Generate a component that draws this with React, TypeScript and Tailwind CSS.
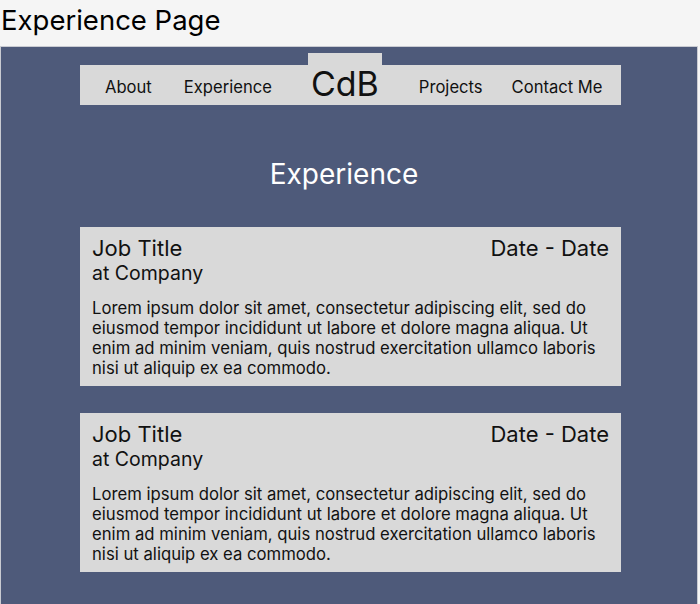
import React from "react";

const lorem =
  "Lorem ipsum dolor sit amet, consectetur adipiscing elit, sed do eiusmod tempor incididunt ut labore et dolore magna aliqua. Ut enim ad minim veniam, quis nostrud exercitation ullamco laboris nisi ut aliquip ex ea commodo.";

function Card() {
  return (
    <div className="bg-[#d9d9d9] px-[12px] pt-[7px] h-[159px]">
      <div className="flex justify-between items-start">
        <div className="text-[22px] leading-[28px] text-[#111]">Job Title</div>
        <div className="text-[22px] leading-[28px] text-[#111]">Date - Date</div>
      </div>
      <div className="text-[19.5px] leading-[22px] text-[#111]">at Company</div>
      <p className="mt-[14px] text-[16.7px] leading-[20px] text-[#111] pr-[8px]">{lorem}</p>
    </div>
  );
}

export default function App() {
  return (
    <div
      className="w-[700px] h-[604px] bg-[#f5f5f5] overflow-hidden"
      style={{ fontFamily: "Inter, 'Noto Sans', sans-serif" }}
    >
      <div className="h-[46px] pl-[1px] pt-[2px] text-[27.5px] leading-[36px] text-black">
        Experience Page
      </div>
      <div className="w-[698px] h-[600px] bg-[#4e5a7a] border-t border-l border-r border-[#c9cbd2]">
        <div className="ml-[79px] mr-[76px] mt-[18px] h-[40px] bg-[#d9d9d9] flex items-center pl-[25px] pt-[4px] text-[16.6px] text-[#111]">
          <span>About</span>
          <span className="ml-[32px]">Experience</span>
          <div className="ml-[36px] self-stretch -mt-[16px] w-[74px] bg-[#d9d9d9] flex items-end justify-center pb-[1px]">
            <span className="text-[34px] leading-[40px]">CdB</span>
          </div>
          <span className="ml-[37px]">Projects</span>
          <span className="ml-[29px]">Contact Me</span>
        </div>
        <div className="mt-[50px] text-center text-white text-[28px] leading-[38px] pr-[10px]">
          Experience
        </div>
        <div className="ml-[79px] mr-[76px] mt-[34px] flex flex-col gap-[27px]">
          <Card />
          <Card />
        </div>
      </div>
    </div>
  );
}
